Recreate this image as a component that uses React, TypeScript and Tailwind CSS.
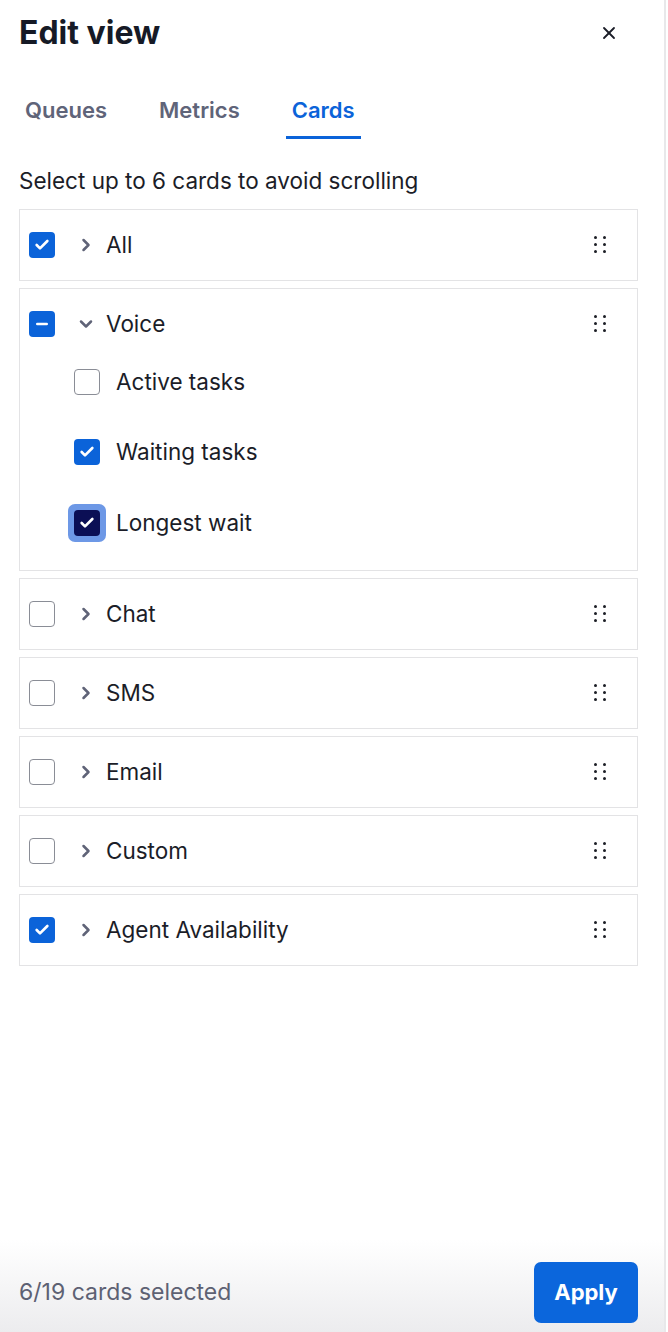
import { X, ChevronRight, ChevronDown, Check, Minus } from "lucide-react";

type State = "on" | "off" | "mixed" | "focus";

function Box({ state }: { state: State }) {
  if (state === "off") {
    return <div className="w-[26px] h-[26px] rounded-[4px] border border-[#8a8d96] bg-white shrink-0" />;
  }
  if (state === "focus") {
    return (
      <div className="w-[38px] h-[38px] -mx-[6px] rounded-[7px] bg-[#6d98e6] flex items-center justify-center shrink-0">
        <div className="w-[26px] h-[26px] rounded-[4px] bg-[#0b0f55] flex items-center justify-center">
          <Check size={16} strokeWidth={4} className="text-white" />
        </div>
      </div>
    );
  }
  return (
    <div className="w-[26px] h-[26px] rounded-[4px] bg-[#0b63d9] flex items-center justify-center shrink-0">
      {state === "on" ? (
        <Check size={16} strokeWidth={4} className="text-white" />
      ) : (
        <Minus size={16} strokeWidth={4} className="text-white" />
      )}
    </div>
  );
}

function Grip() {
  return (
    <div className="grid grid-cols-2 gap-x-[6px] gap-y-[4px] mr-[31px]">
      {[0, 1, 2, 3, 4, 5].map((i) => (
        <span key={i} className="w-[3px] h-[3px] rounded-full bg-[#1c1e26]" />
      ))}
    </div>
  );
}

function Header({ label, state, open }: { label: string; state: State; open?: boolean }) {
  return (
    <div className="h-[70px] flex items-center pl-[9px]">
      <Box state={state} />
      <span className="w-[51px] pl-[21px] flex text-[#5f6377]">
        {open ? <ChevronDown size={20} strokeWidth={3} /> : <ChevronRight size={20} strokeWidth={3} />}
      </span>
      <span className="flex-1 text-[22.5px] text-[#1b1d28]">{label}</span>
      <Grip />
    </div>
  );
}

const groups: { label: string; state: State }[] = [
  { label: "Chat", state: "off" },
  { label: "SMS", state: "off" },
  { label: "Email", state: "off" },
  { label: "Custom", state: "off" },
  { label: "Agent Availability", state: "on" },
];

export default function App() {
  return (
    <div className="w-[668px] h-[1332px] bg-white flex" style={{ fontFamily: "Inter, 'Noto Sans', sans-serif" }}>
      <div className="w-[666px] h-full border-r-2 border-[#e8e8ea] flex flex-col">
        <div className="flex-1 pl-[19px] pr-[26px]">
          <div className="flex items-center justify-between pt-[7px] h-[59px]">
            <h1 className="text-[32px] font-bold text-[#161a26]">Edit view</h1>
            <X size={20} strokeWidth={2.2} className="text-[#1b1d28] mr-[19px]" />
          </div>
          <div className="flex mt-[35px] pl-[6px] gap-[52px] text-[22px] font-semibold">
            <span className="text-[#5f6479] pb-[9px]">Queues</span>
            <span className="text-[#5f6479] pb-[9px]">Metrics</span>
            <span className="text-[#0b63d9] pb-[9px] border-b-[3px] border-[#0b63d9] px-[6px] -mx-[6px]">Cards</span>
          </div>
          <p className="mt-[25px] text-[22.5px] text-[#1b1d28]">Select up to 6 cards to avoid scrolling</p>
          <div className="mt-[11px] flex flex-col gap-[7px]">
            <div className="border border-[#e3e3e5]">
              <Header label="All" state="on" />
            </div>
            <div className="border border-[#e3e3e5] pb-[25px]">
              <Header label="Voice" state="mixed" open />
              <div className="flex flex-col pl-[54px]">
                <div className="h-[44px] flex items-center gap-[16px] mt-[1px]">
                  <Box state="off" />
                  <span className="text-[22.5px] text-[#1b1d28]">Active tasks</span>
                </div>
                <div className="h-[44px] flex items-center gap-[16px] mt-[26px]">
                  <Box state="on" />
                  <span className="text-[22.5px] text-[#1b1d28]">Waiting tasks</span>
                </div>
                <div className="h-[44px] flex items-center gap-[16px] mt-[27px]">
                  <Box state="focus" />
                  <span className="text-[22.5px] text-[#1b1d28]">Longest wait</span>
                </div>
              </div>
            </div>
            {groups.map((g) => (
              <div key={g.label} className="border border-[#e3e3e5]">
                <Header label={g.label} state={g.state} />
              </div>
            ))}
          </div>
        </div>
        <div className="h-[92px] pl-[19px] pr-[26px] flex items-center justify-between bg-gradient-to-b from-white to-[#ececee]">
          <span className="text-[23px] text-[#5d6173] mt-[12px]">6/19 cards selected</span>
          <button className="w-[104px] h-[61px] mt-[12px] rounded-[7px] bg-[#0b66dc] text-white text-[22px] font-bold">
            Apply
          </button>
        </div>
      </div>
    </div>
  );
}
